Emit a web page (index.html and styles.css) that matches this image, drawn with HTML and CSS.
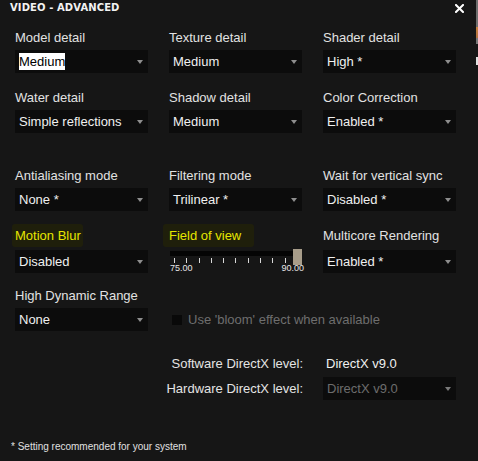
FILE: index.html
```html
<!DOCTYPE html>
<html>
<head>
<meta charset="utf-8">
<link rel="stylesheet" href="styles.css">
</head>
<body>
<div class="window">
  <header class="titlebar">
    <span class="title">VIDEO - ADVANCED</span>
    <span class="close"><svg width="9" height="9" viewBox="0 0 9 9"><path d="M1 1L8 8M8 1L1 8" stroke="#fff" stroke-width="2" fill="none" stroke-linecap="square"/></svg></span>
  </header>

  <div class="row r1">
    <div class="cell"><div class="label">Model detail</div><div class="select"><span class="sel">Medium</span><i class="arrow"></i></div></div>
    <div class="cell"><div class="label">Texture detail</div><div class="select"><span>Medium</span><i class="arrow"></i></div></div>
    <div class="cell"><div class="label">Shader detail</div><div class="select"><span>High *</span><i class="arrow"></i></div></div>
  </div>

  <div class="row r2">
    <div class="cell"><div class="label">Water detail</div><div class="select"><span>Simple reflections</span><i class="arrow"></i></div></div>
    <div class="cell"><div class="label">Shadow detail</div><div class="select"><span>Medium</span><i class="arrow"></i></div></div>
    <div class="cell"><div class="label">Color Correction</div><div class="select"><span>Enabled *</span><i class="arrow"></i></div></div>
  </div>

  <div class="row r3">
    <div class="cell"><div class="label">Antialiasing mode</div><div class="select"><span>None *</span><i class="arrow"></i></div></div>
    <div class="cell"><div class="label">Filtering mode</div><div class="select"><span>Trilinear *</span><i class="arrow"></i></div></div>
    <div class="cell"><div class="label">Wait for vertical sync</div><div class="select"><span>Disabled *</span><i class="arrow"></i></div></div>
  </div>

  <div class="row r4">
    <div class="cell"><div class="label hl hl-blur">Motion Blur</div><div class="select"><span>Disabled</span><i class="arrow"></i></div></div>
    <div class="cell">
      <div class="label hl hl-fov">Field of view</div>
      <div class="slider">
        <div class="track"></div>
        <div class="thumb"></div>
        <div class="ticks"><i></i><i></i><i></i><i></i><i></i><i></i><i></i><i></i><i></i><i></i><i></i></div>
        <div class="scale"><span>75.00</span><span>90.00</span></div>
      </div>
    </div>
    <div class="cell"><div class="label">Multicore Rendering</div><div class="select"><span>Enabled *</span><i class="arrow"></i></div></div>
  </div>

  <div class="row r5">
    <div class="cell"><div class="label">High Dynamic Range</div><div class="select"><span>None</span><i class="arrow"></i></div></div>
    <div class="cell"><div class="check"><i class="box"></i><span>Use 'bloom' effect when available</span></div></div>
    <div class="cell"></div>
  </div>

  <div class="row dx dx-sw">
    <div class="dx-label">Software DirectX level:</div>
    <div class="dx-value">DirectX v9.0</div>
  </div>
  <div class="row dx dx-hw">
    <div class="dx-label">Hardware DirectX level:</div>
    <div class="select disabled"><span>DirectX v9.0</span><i class="arrow"></i></div>
  </div>

  <footer class="note">* Setting recommended for your system</footer>
</div>
<div class="edge"><i class="edge-glyph"></i></div>
</body>
</html>
```

FILE: styles.css
```css
html, body {
  margin: 0;
  padding: 0;
  background: #161616;
}
body {
  width: 478px;
  height: 461px;
  overflow: hidden;
  position: relative;
  font-family: "Liberation Sans", Arial, sans-serif;
  font-size: 13px;
  line-height: 16px;
  color: #e4e4e4;
}
.window {
  width: 476px;
  height: 461px;
  background: #161616;
}
.titlebar {
  display: flex;
  justify-content: space-between;
  align-items: flex-start;
  height: 20px;
  padding: 0 12px 0 10px;
  box-sizing: border-box;
}
.title {
  font-family: "DejaVu Sans", sans-serif;
  font-weight: bold;
  font-size: 10px;
  line-height: 12px;
  padding-top: 2px;
  color: #f2f2f2;
  letter-spacing: 0.1px;
}
.close {
  display: block;
  margin-top: 4px;
  width: 9px;
  height: 9px;
}
.close svg { display: block; }

.row {
  display: grid;
  grid-template-columns: repeat(3, 133px);
  column-gap: 21px;
  padding-left: 15px;
}
.r1 { margin-top: 10px; }
.r2 { margin-top: 17px; }
.r3 { margin-top: 35px; }
.r4 { margin-top: 13px; }
.r5 { margin-top: 12px; }

.label {
  display: block;
  height: 16px;
  line-height: 16px;
  margin-bottom: 4px;
  white-space: nowrap;
  color: #e2e2e2;
}
.r4 .label {
  height: 23px;
  line-height: 23px;
  margin-bottom: 3px;
}
.hl {
  color: #e6e600;
  background: #1f1f0b;
  border-radius: 3px;
}
.r4 .hl-blur {
  margin-left: -3px;
  padding: 0 4px 0 3px;
  width: 64px;
}
.r4 .hl-fov {
  margin-left: -6px;
  padding: 0 6px 0 6px;
  width: 79px;
  margin-bottom: 0;
}

.select {
  position: relative;
  height: 23px;
  line-height: 23px;
  background: #0c0c0c;
  padding-left: 4px;
  color: #f0f0f0;
  white-space: nowrap;
}
.select .sel {
  display: inline-block;
  background: #ffffff;
  color: #000;
  line-height: 17px;
  height: 17px;
  vertical-align: middle;
  position: relative;
  top: -1px;
}
.arrow {
  position: absolute;
  right: 5px;
  top: 10px;
  width: 0;
  height: 0;
  border-top: 4px solid #8e8e8e;
  border-left: 3.5px solid transparent;
  border-right: 3.5px solid transparent;
}
.disabled { color: #6c6c6c; }
.disabled .arrow { border-top-color: #7a7a7a; }

.slider {
  position: relative;
  height: 25px;
}
.track {
  margin: 4px 0 0 1px;
  width: 125px;
  height: 5px;
  background: #050505;
}
.thumb {
  position: absolute;
  left: 124px;
  top: -2px;
  width: 9px;
  height: 16px;
  background: #a89d8a;
}
.ticks {
  display: flex;
  justify-content: space-between;
  width: 124px;
  margin: 2px 0 0 5px;
  height: 5px;
}
.ticks i {
  display: block;
  width: 1px;
  height: 5px;
  background: #d8d8d8;
}
.scale {
  display: flex;
  justify-content: space-between;
  width: 134px;
  margin-left: 1px;
  font-size: 9px;
  line-height: 10px;
  color: #e6e6e6;
}

.check {
  display: flex;
  align-items: center;
  gap: 6px;
  margin-top: 20px;
  height: 23px;
  padding-left: 3px;
  color: #6e6e6e;
  white-space: nowrap;
}
.box {
  display: block;
  flex: 0 0 10px;
  width: 10px;
  height: 10px;
  background: #090909;
}

.dx { height: 23px; line-height: 23px; }
.dx-sw { margin-top: 21px; }
.dx-hw { margin-top: 2px; }
.dx-label {
  grid-column: 1 / 3;
  text-align: right;
  margin-right: -1px;
  white-space: nowrap;
  color: #e4e4e4;
}
.dx-value {
  padding-left: 3px;
  color: #f0f0f0;
}

.note {
  margin-top: 41px;
  padding-left: 11px;
  font-size: 10px;
  line-height: 12px;
  color: #e0e0e0;
}

.edge {
  position: absolute;
  left: 476px;
  top: 0;
  width: 2px;
  height: 44px;
  background: linear-gradient(#6e6e6e 0, #6e6e6e 27px, #c7823e 27px, #b07040 38px, #777 38px);
}
.edge-glyph {
  position: absolute;
  top: 57px;
  left: 0;
  width: 2px;
  height: 8px;
  background: #e0e0e0;
}
```
